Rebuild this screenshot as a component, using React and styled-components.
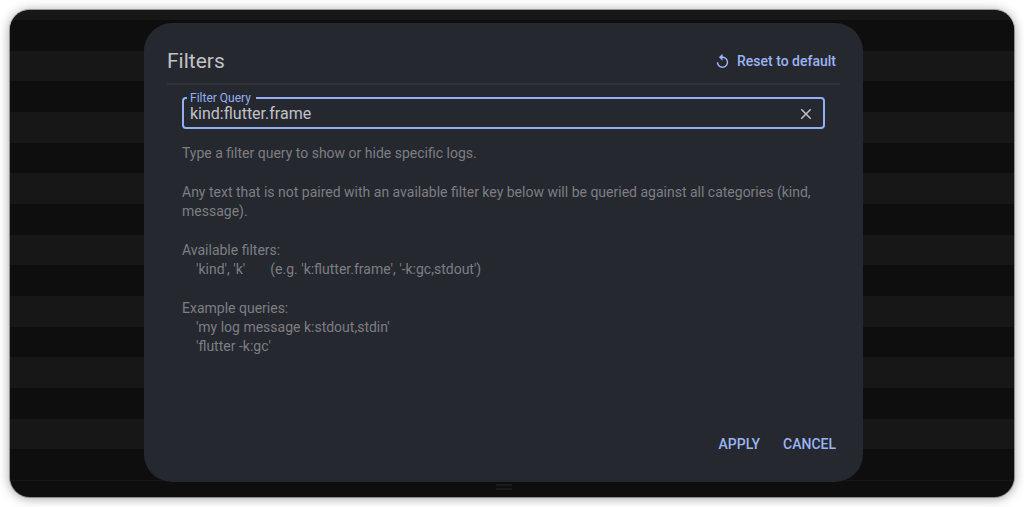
import { useState } from 'react';
import styled, { createGlobalStyle } from 'styled-components';
import { MdClose, MdReplay } from 'react-icons/md';

const DEFAULT_QUERY = 'kind:flutter.frame';
const LOG_ROWS = Array.from({ length: 15 }, (_, i) => i);

function App() {
  const [query, setQuery] = useState(DEFAULT_QUERY);

  const queryChangeHandler = (event) => {
    setQuery(event.target.value);
  };

  return (
    <>
      <GlobalStyle />
      <Page>
        <Window>
          <Logs>
            <LogsHeader />
            {LOG_ROWS.map((row) => (
              <LogRow key={row} $light={row % 2 === 1} />
            ))}
            <SplitBar>
              <Grip />
            </SplitBar>
          </Logs>
          <Overlay>
            <Dialog role="dialog" aria-labelledby="filters-title">
              <Header>
                <Title id="filters-title">Filters</Title>
                <TextButton type="button" onClick={() => setQuery(DEFAULT_QUERY)}>
                  <MdReplay size={17} />
                  Reset to default
                </TextButton>
              </Header>
              <Content>
                <Field>
                  <legend>
                    <label htmlFor="filter-query">Filter Query</label>
                  </legend>
                  <FieldRow>
                    <Input
                      id="filter-query"
                      type="text"
                      spellCheck={false}
                      value={query}
                      onChange={queryChangeHandler}
                    />
                    <ClearButton type="button" aria-label="Clear" onClick={() => setQuery('')}>
                      <MdClose size={18} />
                    </ClearButton>
                  </FieldRow>
                </Field>
                <Help>
                  <p>Type a filter query to show or hide specific logs.</p>
                  <p>
                    Any text that is not paired with an available filter key below will be
                    queried against all categories (kind, message).
                  </p>
                  <div>
                    <p>Available filters:</p>
                    <Example>
                      <span>'kind', 'k'</span>
                      <span>(e.g. 'k:flutter.frame', '-k:gc,stdout')</span>
                    </Example>
                  </div>
                  <div>
                    <p>Example queries:</p>
                    <Example>'my log message k:stdout,stdin'</Example>
                    <Example>'flutter -k:gc'</Example>
                  </div>
                </Help>
              </Content>
              <Actions>
                <TextButton type="button">APPLY</TextButton>
                <TextButton type="button">CANCEL</TextButton>
              </Actions>
            </Dialog>
          </Overlay>
        </Window>
      </Page>
    </>
  );
}

export default App;

const GlobalStyle = createGlobalStyle`
  * {
    box-sizing: border-box;
  }
  body {
    margin: 0;
    background-color: #ffffff;
    font-family: Roboto, sans-serif;
  }
  p {
    margin: 0;
  }
`;

const Page = styled.div`
  display: flex;
  min-height: 100vh;
  padding: 10px;
`;

const Window = styled.main`
  position: relative;
  display: flex;
  flex: 1;
  border-radius: 20px;
  overflow: hidden;
  background-color: #0e0e0e;
  box-shadow: 0 0 0 1px rgba(0, 0, 0, 0.3), 0 1px 12px rgba(0, 0, 0, 0.4);
`;

const Logs = styled.div`
  display: flex;
  flex: 1;
  flex-direction: column;
`;

const LogsHeader = styled.div`
  height: 10px;
  background-color: #171717;
`;

const LogRow = styled.div`
  flex: 1;
  background-color: ${(props) => (props.$light ? '#171717' : '#0e0e0e')};
`;

const SplitBar = styled.div`
  display: flex;
  justify-content: center;
  height: 17px;
  padding: 3px 16px 0 0;
  border-top: 1px solid #171717;
`;

const Grip = styled.div`
  width: 16px;
  height: 6px;
  border: solid #1a1a1a;
  border-width: 2px 0;
`;

const Overlay = styled.div`
  position: absolute;
  inset: 0;
  display: flex;
  padding: 13px 151px 15px 134px;
`;

const Dialog = styled.section`
  display: flex;
  flex: 1;
  flex-direction: column;
  padding: 16px 23px 23px;
  border-radius: 28px;
  background-color: #262830;
`;

const Header = styled.header`
  display: flex;
  align-items: center;
  justify-content: space-between;
  height: 46px;
  padding-right: 4px;
  border-bottom: 2px solid #30323a;
`;

const Title = styled.h1`
  margin: 0;
  color: #c2c1c6;
  font-size: 21px;
  font-weight: 400;
  line-height: 24px;
`;

const TextButton = styled.button`
  display: flex;
  align-items: center;
  gap: 6px;
  padding: 0;
  border: none;
  background: none;
  color: #9ab4f4;
  font-family: inherit;
  font-size: 14px;
  font-weight: 500;
  line-height: 20px;
  cursor: pointer;
`;

const Content = styled.div`
  flex: 1;
  padding: 7px 15px 0;
`;

const Field = styled.fieldset`
  margin: 0;
  padding: 0 3px;
  border: 2px solid #91aff2;
  border-radius: 4px;

  legend {
    padding: 0 5px 0 3px;
    color: #91aff2;
    font-size: 12px;
    line-height: 12px;
  }
`;

const FieldRow = styled.div`
  display: flex;
  align-items: center;
  height: 23px;
  padding: 0 3px 3px;
`;

const Input = styled.input`
  flex: 1;
  min-width: 0;
  padding: 0;
  border: none;
  outline: none;
  background: none;
  color: #c2c1c6;
  font-family: inherit;
  font-size: 16px;
  line-height: 20px;
`;

const ClearButton = styled.button`
  display: flex;
  padding: 0 2px;
  border: none;
  background: none;
  color: #c2c1c6;
  cursor: pointer;
`;

const Help = styled.div`
  display: flex;
  flex-direction: column;
  gap: 20px;
  padding-top: 15px;
  color: #7d7e82;
  font-size: 14px;
  line-height: 19px;
`;

const Example = styled.p`
  display: flex;
  gap: 25px;
  padding-left: 14px;
`;

const Actions = styled.footer`
  display: flex;
  justify-content: flex-end;
  gap: 23px;
  padding: 0 4px 5px 0;
`;
